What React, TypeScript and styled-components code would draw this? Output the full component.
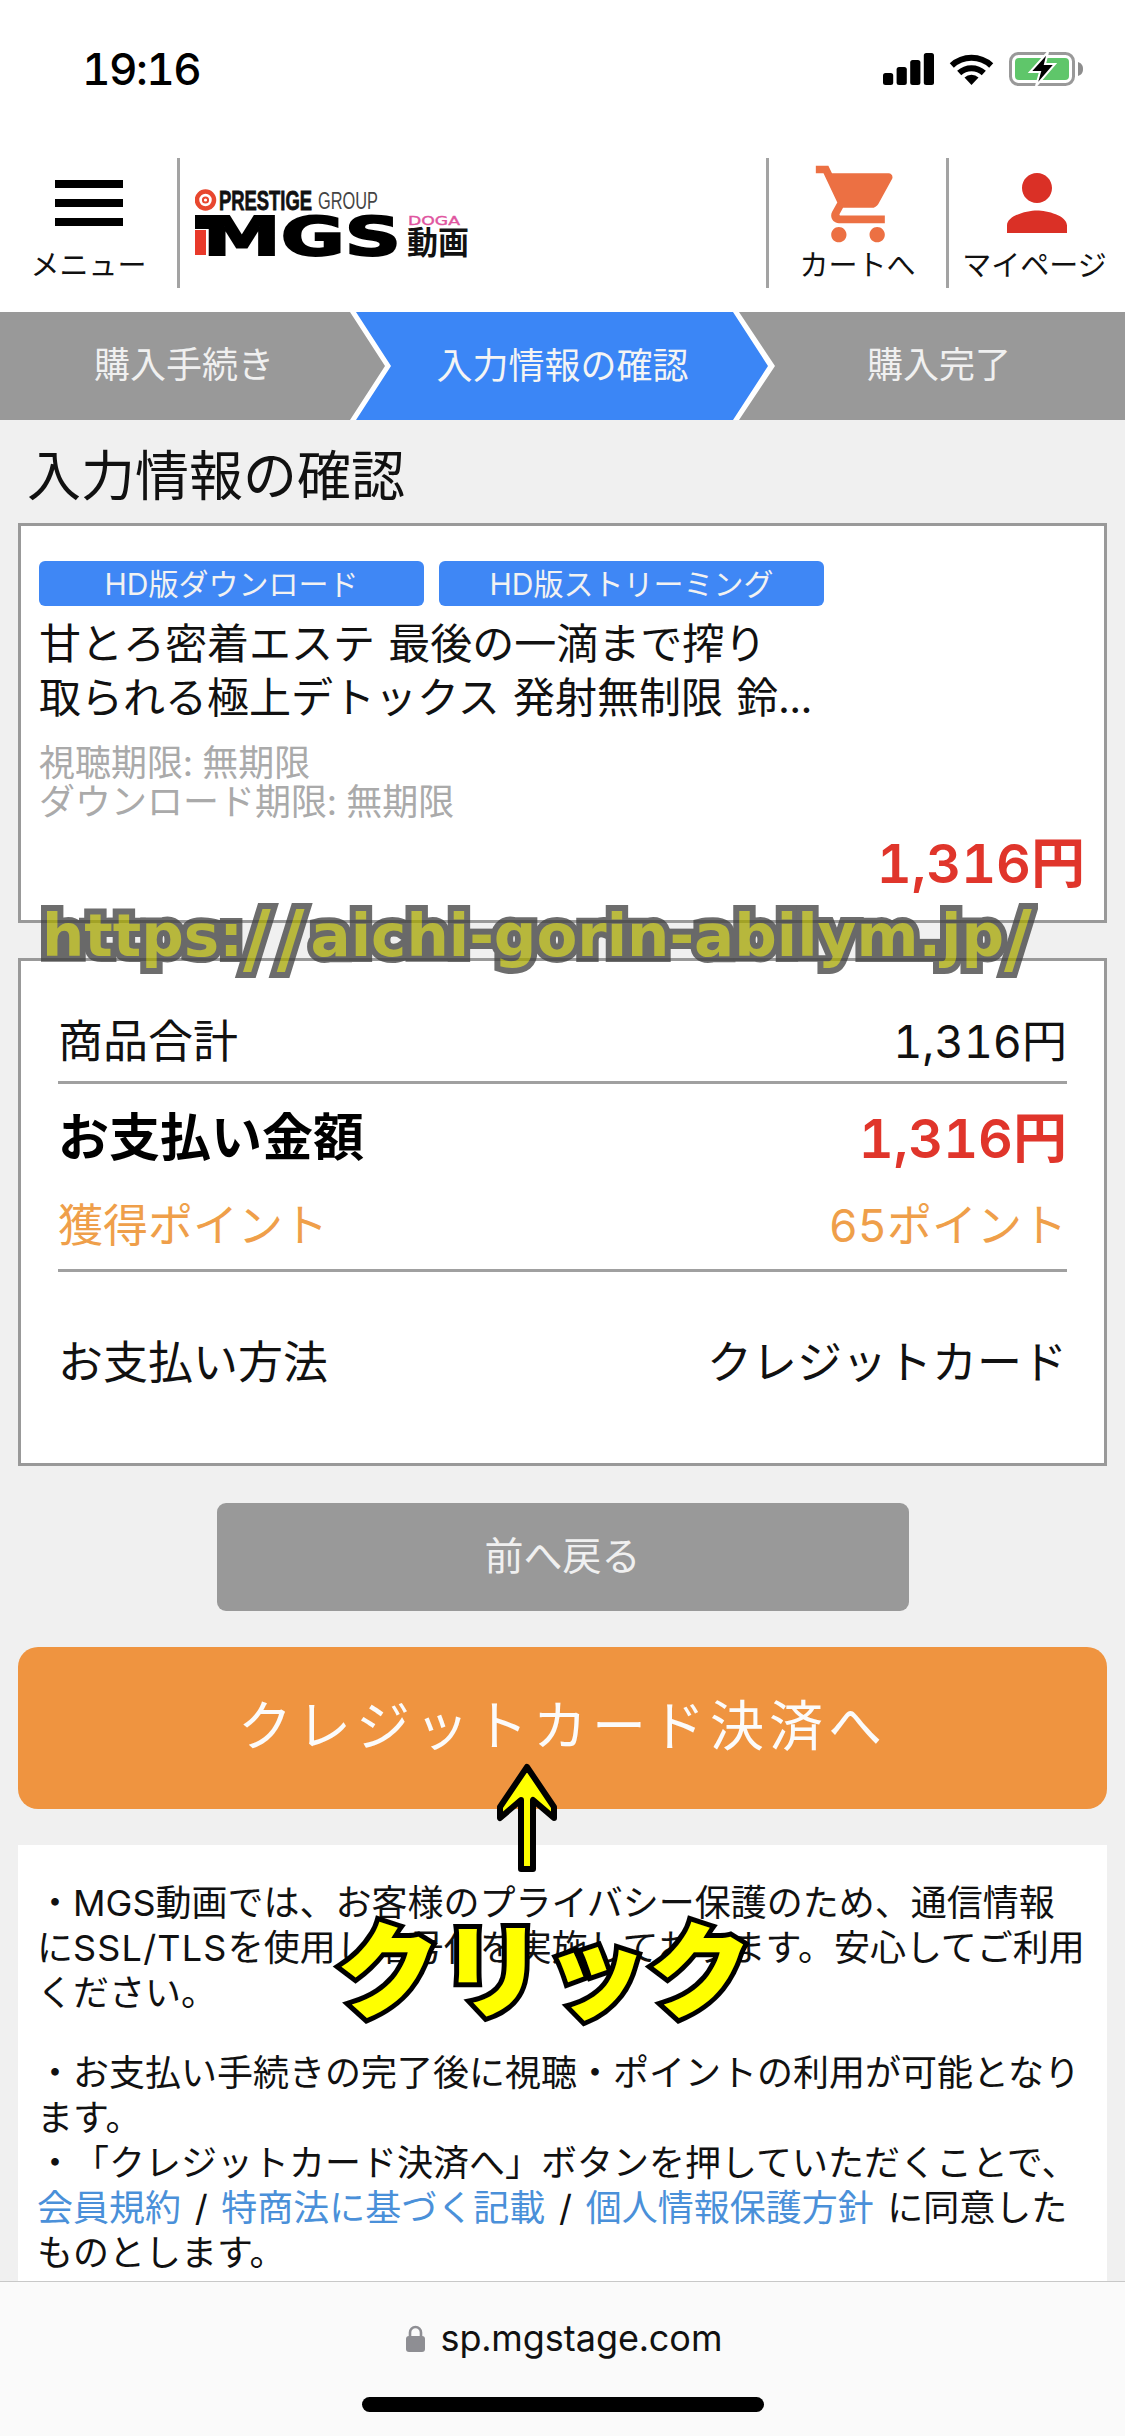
import styled, { createGlobalStyle } from "styled-components";

const JP = `"Inter", "Noto Sans CJK JP", sans-serif`;

const GlobalStyle = createGlobalStyle`
  html, body {
    margin: 0;
    padding: 0;
    background: #ffffff;
  }
  * {
    box-sizing: border-box;
  }
`;

const CART_PATH =
  "M7 18c-1.1 0-1.99.9-1.99 2S5.9 22 7 22s2-.9 2-2-.9-2-2-2zM1 2v2h2l3.6 7.59-1.35 2.45c-.16.28-.25.61-.25.96 0 1.1.9 2 2 2h12v-2H7.42c-.14 0-.25-.11-.25-.25l.03-.12.9-1.63h7.45c.75 0 1.41-.41 1.75-1.03l3.58-6.49c.08-.14.12-.31.12-.48 0-.55-.45-1-1-1H5.21l-.94-2H1zm16 16c-1.1 0-1.99.9-1.99 2s.89 2 1.99 2 2-.9 2-2-.9-2-2-2z";
const PERSON_PATH =
  "M12 12c2.21 0 4-1.79 4-4s-1.79-4-4-4-4 1.79-4 4 1.79 4 4 4zm0 2c-2.67 0-8 1.34-8 4v2h16v-2c0-2.66-5.33-4-8-4z";

const StatusIcons = () => (
  <StatusRight>
    <svg width="51" height="32" viewBox="0 0 51 32">
      <rect x="0" y="20" width="10.2" height="12" rx="2.5" />
      <rect x="13.6" y="14" width="10.2" height="18" rx="2.5" />
      <rect x="27.2" y="7" width="10.2" height="25" rx="2.5" />
      <rect x="40.8" y="0" width="10.2" height="32" rx="2.5" />
    </svg>
    <svg width="45" height="32" viewBox="0 0 45 32">
      <path d="M2.8 12.5 A 29 29 0 0 1 42.2 12.5" fill="none" stroke="#000" strokeWidth="6" />
      <path d="M10.2 20 A 18 18 0 0 1 34.8 20" fill="none" stroke="#000" strokeWidth="6" />
      <path d="M15.5 24.5 A 10 10 0 0 1 29.5 24.5 L22.5 32 Z" />
    </svg>
    <svg width="74" height="36" viewBox="0 0 74 36">
      <rect x="1.5" y="2.5" width="63" height="31" rx="8" fill="none" stroke="#999999" strokeWidth="3" />
      <rect x="6" y="7" width="54" height="22" rx="4" fill="#5fc66a" />
      <path d="M69 11 C72 12 74 14 74 18 C74 22 72 24 69 25 Z" fill="#8d8d8d" />
      <path d="M39 1 L21 21 L31 21 L27 35 L46 13 L36 13 Z" fill="#000" stroke="#fff" strokeWidth="2" />
    </svg>
  </StatusRight>
);

const Logo = () => (
  <svg width="280" height="70" viewBox="0 0 280 70">
    <circle cx="10.5" cy="12" r="8.5" fill="none" stroke="#e8472e" strokeWidth="4.5" />
    <circle cx="10.5" cy="12" r="2.6" fill="none" stroke="#e8472e" strokeWidth="2" />
    <text x="24" y="22" fontFamily="'Liberation Sans', sans-serif" fontWeight="700" fontSize="27" textLength="93" lengthAdjust="spacingAndGlyphs" fill="#111" stroke="#111" strokeWidth="0.8">PRESTIGE</text>
    <text x="123" y="21" fontFamily="'Liberation Sans', sans-serif" fontSize="23" textLength="60" lengthAdjust="spacingAndGlyphs" fill="#444">GROUP</text>
    <rect x="0" y="27" width="14" height="14" fill="#000" />
    <rect x="0" y="42" width="11" height="25" fill="#e8392a" />
    <text x="8" y="67" fontFamily="'DejaVu Sans', sans-serif" fontWeight="700" fontSize="54" textLength="198" lengthAdjust="spacingAndGlyphs" fill="#000" stroke="#000" strokeWidth="2">MGS</text>
    <text x="213" y="37" fontFamily="'DejaVu Sans', sans-serif" fontSize="13" textLength="52" lengthAdjust="spacingAndGlyphs" fill="#e0559f" stroke="#e0559f" strokeWidth="0.4">DOGA</text>
    <text x="212" y="66" fontFamily="'Noto Sans CJK JP', sans-serif" fontWeight="700" fontSize="32" textLength="62" lengthAdjust="spacingAndGlyphs" fill="#111">動画</text>
  </svg>
);

export default function App() {
  return (
    <Screen>
      <GlobalStyle />
      <StatusBar>
        <Time>19:16</Time>
        <StatusIcons />
      </StatusBar>

      <Header>
        <MenuCell>
          <IconSlot>
            <Burger>
              <BurgerBar />
              <BurgerBar />
              <BurgerBar />
            </Burger>
          </IconSlot>
          <CellLabel>メニュー</CellLabel>
        </MenuCell>
        <LogoCell>
          <Logo />
        </LogoCell>
        <NavCell $width={180}>
          <IconSlot>
            <svg width="92" height="92" viewBox="0 0 24 24">
              <path d={CART_PATH} fill="#ec7043" />
            </svg>
          </IconSlot>
          <CellLabel>カートへ</CellLabel>
        </NavCell>
        <NavCell $width={179}>
          <IconSlot>
            <svg width="90" height="90" viewBox="0 0 24 24">
              <path d={PERSON_PATH} fill="#da3026" />
            </svg>
          </IconSlot>
          <CellLabel $shift={5}>マイページ</CellLabel>
        </NavCell>
      </Header>

      <Steps>
        <Step $pad="0 0 0 18px">購入手続き</Step>
        <ActiveStep>
          <ActiveLabel>入力情報の確認</ActiveLabel>
        </ActiveStep>
        <Step $pad="0 22px 0 0">購入完了</Step>
      </Steps>

      <Main>
        <PageTitle>入力情報の確認</PageTitle>

        <ItemCard>
          <Tags>
            <Tag>HD版ダウンロード</Tag>
            <Tag>HD版ストリーミング</Tag>
          </Tags>
          <ItemTitle>
            甘とろ密着エステ 最後の一滴まで搾り
            <br />
            取られる極上デトックス 発射無制限 鈴...
          </ItemTitle>
          <Meta>
            視聴期限: 無期限
            <br />
            ダウンロード期限: 無期限
          </Meta>
          <ItemPrice>1,316円</ItemPrice>
        </ItemCard>

        <SummaryCard>
          <SummaryRow $height={80} $divider $paddingBottom={6}>
            <span>商品合計</span>
            <span>1,316円</span>
          </SummaryRow>
          <SummaryRow $height={106} $paddingBottom={6}>
            <TotalLabel>お支払い金額</TotalLabel>
            <TotalPrice>1,316円</TotalPrice>
          </SummaryRow>
          <SummaryRow $height={79} $divider $color="#ef9f4a" $paddingBottom={14}>
            <span>獲得ポイント</span>
            <span>65ポイント</span>
          </SummaryRow>
          <SummaryRow $height={180} $paddingBottom={6}>
            <span>お支払い方法</span>
            <span>クレジットカード</span>
          </SummaryRow>
        </SummaryCard>

        <BackButton>前へ戻る</BackButton>
        <PayButton>クレジットカード決済へ</PayButton>

        <Notice>
          <p>
            ・MGS動画では、お客様のプライバシー保護のため、通信情報
            <br />
            に<Latin>SSL/TLS</Latin>を使用し暗号化を実施しております。安心してご利用
            <br />
            ください。
          </p>
          <p>
            ・お支払い手続きの完了後に視聴・ポイントの利用が可能となり
            <br />
            ます。
            <br />
            ・「クレジットカード決済へ」ボタンを押していただくことで、
            <br />
            <NoticeLink>会員規約</NoticeLink> / <NoticeLink>特商法に基づく記載</NoticeLink> /{" "}
            <NoticeLink>個人情報保護方針</NoticeLink> に同意した
            <br />
            ものとします。
          </p>
        </Notice>
      </Main>

      <BottomBar>
        <Address>
          <svg width="19" height="27" viewBox="0 0 19 27">
            <path d="M4 12 V7.5 A5.5 5.5 0 0 1 15 7.5 V12" fill="none" stroke="#8e8e93" strokeWidth="2.6" />
            <rect x="0" y="11" width="19" height="16" rx="3" fill="#8e8e93" />
          </svg>
          <AddressText>sp.mgstage.com</AddressText>
        </Address>
        <HomeIndicator />
      </BottomBar>

      <UrlStamp>
        https:<UrlSlash>//</UrlSlash>aichi-gorin-abilym.jp<UrlSlash>/</UrlSlash>
      </UrlStamp>
      <ClickArrow width="64" height="112" viewBox="0 0 64 112">
        <path
          d="M32 5 L59 45 L59 56 L38 38 L38 107 L26 107 L26 38 L5 56 L5 45 Z"
          fill="#ffff00"
          stroke="#000"
          strokeWidth="6"
          strokeLinejoin="round"
        />
      </ClickArrow>
      <ClickText>クリック</ClickText>
    </Screen>
  );
}

const Screen = styled.div`
  position: relative;
  width: 1125px;
  height: 2436px;
  overflow: hidden;
  display: flex;
  flex-direction: column;
  background: #ffffff;
  font-family: ${JP};
  font-variant-numeric: tabular-nums;
  text-spacing-trim: space-all;
  color: #000000;
`;

const StatusBar = styled.div`
  height: 140px;
  flex-shrink: 0;
  display: flex;
  justify-content: space-between;
  align-items: flex-start;
  padding: 52px 42px 0 82px;
`;
const Time = styled.div`
  font-size: 44px;
  line-height: 34px;
  font-weight: 500;
  letter-spacing: -1.5px;
`;
const StatusRight = styled.div`
  display: flex;
  align-items: center;
  gap: 15px;
  height: 34px;
`;

const Header = styled.div`
  height: 172px;
  flex-shrink: 0;
  display: flex;
  align-items: flex-start;
  padding-top: 18px;
`;
const MenuCell = styled.div`
  width: 180px;
  height: 130px;
  border-right: 3px solid #a3a3a3;
  display: flex;
  flex-direction: column;
  align-items: center;
`;
const LogoCell = styled.div`
  flex: 1;
  height: 130px;
  padding: 30px 0 0 15px;
`;
const NavCell = styled.div<{ $width: number }>`
  width: ${(p) => p.$width}px;
  height: 130px;
  border-left: 3px solid #a3a3a3;
  display: flex;
  flex-direction: column;
  align-items: center;
`;
const IconSlot = styled.div`
  height: 88px;
  display: flex;
  justify-content: center;
`;
const Burger = styled.div`
  padding-top: 22px;
  display: flex;
  flex-direction: column;
  gap: 11px;
`;
const BurgerBar = styled.div`
  width: 68px;
  height: 8px;
  background: #000000;
`;
const CellLabel = styled.div<{ $shift?: number }>`
  font-size: 29px;
  line-height: 40px;
  white-space: nowrap;
  color: #111111;
  margin-right: ${(p) => p.$shift ?? 0}px;
`;

const Steps = styled.div`
  height: 108px;
  flex-shrink: 0;
  display: grid;
  grid-template-columns: 350px 425px 350px;
  background: #999999;
  color: #f0f0f0;
  font-size: 36px;
`;
const Step = styled.div<{ $pad: string }>`
  display: flex;
  align-items: center;
  justify-content: center;
  padding: ${(p) => p.$pad};
  padding-bottom: 8px;
`;
const ActiveStep = styled.div`
  position: relative;
  display: flex;
  align-items: center;
  justify-content: center;
  padding-bottom: 6px;
  background: #ffffff;
  clip-path: polygon(0 0, 389px 0, 425px 54px, 389px 108px, 0 108px, 35px 54px);

  &::before {
    content: "";
    position: absolute;
    inset: 0;
    background: #3b86f6;
    clip-path: polygon(6px 0, 383px 0, 418px 54px, 383px 108px, 6px 108px, 41px 54px);
  }
`;
const ActiveLabel = styled.span`
  position: relative;
  color: #f4f4f4;
`;

const Main = styled.div`
  flex: 1;
  min-height: 0;
  display: flex;
  flex-direction: column;
  background: #f0f0f0;
  padding: 0 18px;
`;
const PageTitle = styled.h1`
  margin: 0;
  height: 103px;
  flex-shrink: 0;
  padding: 27px 0 0 9px;
  font-size: 54px;
  line-height: 60px;
  font-weight: 400;
  color: #111111;
`;
const ItemCard = styled.div`
  height: 400px;
  flex-shrink: 0;
  display: flex;
  flex-direction: column;
  background: #ffffff;
  border: 3px solid #999999;
  padding: 35px 19px 0 18px;
`;
const Tags = styled.div`
  display: flex;
  gap: 15px;
`;
const Tag = styled.div`
  width: 385px;
  height: 45px;
  display: flex;
  align-items: center;
  justify-content: center;
  padding-bottom: 4px;
  background: #3f87f5;
  border-radius: 6px;
  color: #f2f2f2;
  font-size: 30px;
`;
const ItemTitle = styled.div`
  margin-top: 11px;
  font-size: 42px;
  line-height: 54px;
  word-spacing: 2px;
  color: #111111;
`;
const Meta = styled.div`
  margin-top: 19px;
  font-size: 36px;
  line-height: 39px;
  color: #aaaaaa;
`;
const ItemPrice = styled.div`
  margin-top: 12px;
  text-align: right;
  font-size: 54px;
  line-height: 60px;
  font-weight: 600;
  color: #e0352b;
`;
const SummaryCard = styled.div`
  height: 508px;
  flex-shrink: 0;
  margin-top: 35px;
  background: #ffffff;
  border: 3px solid #999999;
  padding: 40px 37px 0;
`;
const SummaryRow = styled.div<{
  $height: number;
  $divider?: boolean;
  $color?: string;
  $paddingBottom?: number;
}>`
  height: ${(p) => p.$height + (p.$divider ? 3 : 0)}px;
  display: flex;
  justify-content: space-between;
  align-items: center;
  padding-bottom: ${(p) => p.$paddingBottom ?? 0}px;
  border-bottom: ${(p) => (p.$divider ? "3px solid #a0a0a0" : "none")};
  font-size: 45px;
  color: ${(p) => p.$color ?? "#111111"};
`;
const TotalLabel = styled.span`
  font-size: 51px;
  font-weight: 700;
  color: #000000;
`;
const TotalPrice = styled.span`
  font-size: 54px;
  font-weight: 600;
  color: #e0352b;
`;
const BackButton = styled.div`
  width: 692px;
  height: 108px;
  flex-shrink: 0;
  margin: 37px auto 0;
  display: flex;
  align-items: center;
  justify-content: center;
  padding-bottom: 8px;
  background: #999999;
  border-radius: 9px;
  color: #f0f0f0;
  font-size: 39px;
`;
const PayButton = styled.div`
  height: 162px;
  flex-shrink: 0;
  margin-top: 36px;
  display: flex;
  align-items: center;
  justify-content: center;
  padding-bottom: 12px;
  background: #ef9440;
  border-radius: 20px;
  color: #fbfbfb;
  font-size: 54px;
  letter-spacing: 5px;
`;
const Notice = styled.div`
  flex: 1;
  min-height: 0;
  margin-top: 36px;
  overflow: hidden;
  background: #ffffff;
  padding: 36px 0 0 19px;
  font-size: 36px;
  line-height: 45px;
  word-spacing: 4px;
  white-space: nowrap;
  color: #111111;

  p {
    margin: 0 0 35px;
  }
`;
const Latin = styled.span`
  letter-spacing: 1.2px;
`;
const NoticeLink = styled.span`
  color: #4a90d9;
`;

const BottomBar = styled.div`
  height: 155px;
  flex-shrink: 0;
  display: flex;
  flex-direction: column;
  align-items: center;
  background: #fafafa;
  border-top: 1px solid #c8c8c8;
  padding-top: 35px;
`;
const Address = styled.div`
  height: 42px;
  display: flex;
  align-items: center;
  gap: 16px;
  margin-left: 3px;
`;
const AddressText = styled.span`
  font-size: 36px;
  color: #111111;
`;
const HomeIndicator = styled.div`
  margin-top: 38px;
  width: 402px;
  height: 15px;
  border-radius: 8px;
  background: #000000;
`;

const UrlStamp = styled.div`
  position: absolute;
  left: 42px;
  top: 900px;
  font-family: "DejaVu Sans", sans-serif;
  font-weight: 700;
  font-size: 59.5px;
  font-kerning: none;
  line-height: 72px;
  white-space: nowrap;
  color: #a5a500;
  -webkit-text-stroke: 12px #3d3d3d;
  paint-order: stroke fill;
  opacity: 0.75;
`;
const UrlSlash = styled.span`
  font-size: 76px;
  letter-spacing: 6px;
  vertical-align: -9px;
  line-height: 0;
`;
const ClickArrow = styled.svg`
  position: absolute;
  left: 495px;
  top: 1762px;
`;
const ClickText = styled.div`
  position: absolute;
  left: 336px;
  top: 1895px;
  font-family: "Noto Sans CJK JP", sans-serif;
  font-weight: 900;
  font-size: 104px;
  line-height: 140px;
  white-space: nowrap;
  color: #ffff00;
  -webkit-text-stroke: 10px #000000;
  paint-order: stroke fill;
`;
